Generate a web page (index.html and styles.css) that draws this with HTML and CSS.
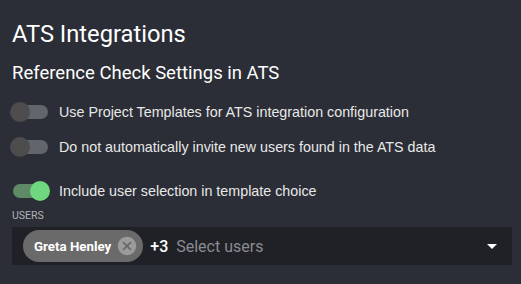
FILE: index.html
```html
<!DOCTYPE html>
<html>
<head>
<meta charset="utf-8">
<link rel="stylesheet" href="styles.css">
</head>
<body>
<div class="page">
  <h1 class="title">ATS Integrations</h1>
  <h2 class="subtitle">Reference Check Settings in ATS</h2>
  <div class="options">
    <label class="opt">
      <span class="switch"><span class="track"></span><span class="thumb"></span></span>
      <span class="lbl">Use Project Templates for ATS integration configuration</span>
    </label>
    <label class="opt">
      <span class="switch"><span class="track"></span><span class="thumb"></span></span>
      <span class="lbl">Do not automatically invite new users found in the ATS data</span>
    </label>
    <label class="opt opt-on">
      <span class="switch"><span class="track"></span><span class="thumb"></span></span>
      <span class="lbl">Include user selection in template choice</span>
    </label>
  </div>
  <div class="field">
    <div class="field-label">USERS</div>
    <div class="select">
      <span class="chip">
        <span class="chip-text">Greta Henley</span>
        <svg class="chip-del" viewBox="0 0 24 24" width="22" height="22"><path fill="#9b9b9b" d="M12 2C6.47 2 2 6.47 2 12s4.47 10 10 10 10-4.47 10-10S17.53 2 12 2zm5 13.59L15.59 17 12 13.41 8.41 17 7 15.59 10.59 12 7 8.41 8.41 7 12 10.59 15.59 7 17 8.41 13.41 12 17 15.59z"/></svg>
      </span>
      <span class="more">+3</span>
      <span class="placeholder">Select users</span>
      <svg class="arrow" viewBox="0 0 24 24" width="24" height="24"><path fill="#ffffff" d="M7 10l5 5 5-5z"/></svg>
    </div>
  </div>
</div>
</body>
</html>
```
FILE: styles.css
```css
html, body {
  margin: 0;
  padding: 0;
}
body {
  background: #2b2e36;
  color: #ffffff;
  font-family: Roboto, "Noto Sans", sans-serif;
  width: 521px;
  height: 284px;
  overflow: hidden;
}
.page {
  padding: 20px 9px 0 12px;
  display: flex;
  flex-direction: column;
}
.title {
  margin: 0;
  font-size: 23.7px;
  font-weight: 400;
  line-height: 28px;
}
.subtitle {
  margin: 14px 0 0 0;
  font-size: 18.5px;
  font-weight: 400;
  line-height: 22px;
}
.options {
  display: flex;
  flex-direction: column;
  margin-top: 10px;
  margin-left: -11px;
}
.opt {
  display: flex;
  align-items: center;
  height: 35px;
}
.opt-on {
  margin-top: 9px;
}
.switch {
  display: grid;
  width: 58px;
  height: 38px;
  align-items: center;
  flex: none;
}
.track, .thumb {
  grid-area: 1 / 1;
}
.track {
  margin: 0 11px 0 12px;
  height: 14px;
  border-radius: 7px;
  background: #61656c;
}
.thumb {
  width: 20px;
  height: 20px;
  border-radius: 50%;
  background: #4d4d4d;
  margin-left: 9px;
}
.opt-on .track {
  background: #5e8a66;
}
.opt-on .thumb {
  background: #6fd77f;
  margin-left: 29px;
}
.lbl {
  font-family: "Liberation Sans", Arial, sans-serif;
  font-size: 14.3px;
  color: #e8e8e8;
}
.field {
  display: flex;
  flex-direction: column;
  margin-top: 2px;
}
.field-label {
  font-size: 10.5px;
  color: #b0b2b6;
  line-height: 12px;
}
.select {
  margin-top: 5px;
  height: 38px;
  background: #1f2127;
  display: flex;
  align-items: center;
  padding: 0 8px 0 11px;
}
.chip {
  display: flex;
  align-items: center;
  height: 32px;
  border-radius: 16px;
  background: #6a6a6a;
  padding: 0 5px 0 11px;
}
.chip-text {
  font-size: 13.3px;
  font-weight: 700;
  color: #ffffff;
}
.chip-del {
  margin-left: 5px;
}
.more {
  margin-left: 7px;
  font-size: 16px;
  font-weight: 500;
  color: #ffffff;
}
.placeholder {
  margin-left: 8px;
  font-size: 16px;
  color: #8a8b8e;
  flex: 1;
}
.arrow {
  flex: none;
}
```
